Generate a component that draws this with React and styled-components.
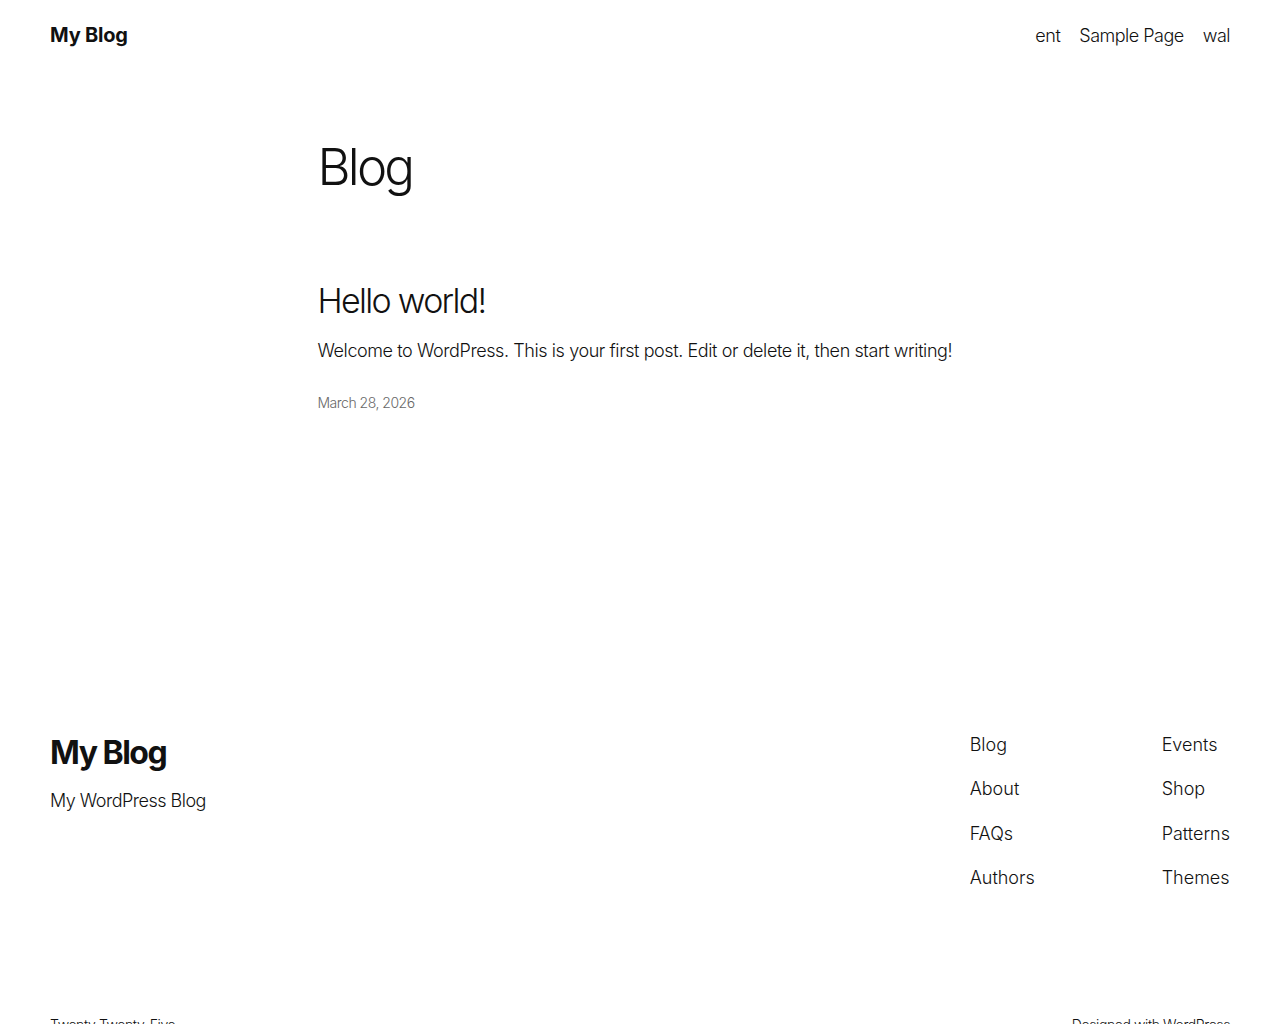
import React from 'react';
import styled, { createGlobalStyle } from 'styled-components';

const GlobalStyle = createGlobalStyle`
  html, body {
    margin: 0;
    padding: 0;
    background: #fff;
  }
  body {
    font-family: Inter, "Noto Sans", sans-serif;
    color: #111111;
    -webkit-font-smoothing: antialiased;
  }
  a {
    color: inherit;
    text-decoration: none;
  }
`;

const navPages = ['ent', 'Sample Page', 'wal'];
const footerCols = [
  ['Blog', 'About', 'FAQs', 'Authors'],
  ['Events', 'Shop', 'Patterns', 'Themes'],
];

const App = () => {
  return (
    <>
      <GlobalStyle />
      <Page>
        <Header>
          <SiteTitle href='#'>My Blog</SiteTitle>
          <Nav>
            {navPages.map((p) => (
              <NavLink key={p} href='#'>
                {p}
              </NavLink>
            ))}
          </Nav>
        </Header>

        <Main>
          <PageTitle>Blog</PageTitle>
          <Post>
            <PostTitle>
              <a href='#'>Hello world!</a>
            </PostTitle>
            <Excerpt>Welcome to WordPress. This is your first post. Edit or delete it, then start writing!</Excerpt>
            <PostDate>March 28, 2026</PostDate>
          </Post>
        </Main>

        <Footer>
          <FooterTop>
            <Brand>
              <FooterTitle href='#'>My Blog</FooterTitle>
              <Tagline>My WordPress Blog</Tagline>
            </Brand>
            <FooterNav>
              {footerCols.map((col, i) => (
                <FooterCol key={i}>
                  {col.map((item) => (
                    <FooterLink key={item} href='#'>
                      {item}
                    </FooterLink>
                  ))}
                </FooterCol>
              ))}
            </FooterNav>
          </FooterTop>
          <FooterBottom>
            <Credit>Twenty Twenty-Five</Credit>
            <Credit>
              Designed with <a href='#'>WordPress</a>
            </Credit>
          </FooterBottom>
        </Footer>
      </Page>
    </>
  );
};

export default App;

const Page = styled.div`
  display: flex;
  flex-direction: column;
  min-height: 100vh;
`;

const Header = styled.header`
  display: flex;
  align-items: center;
  justify-content: space-between;
  height: 70px;
  padding: 0 50px;
`;

const SiteTitle = styled.a`
  font-size: 20px;
  font-weight: 700;
  letter-spacing: -0.2px;
`;

const Nav = styled.nav`
  display: flex;
  gap: 19px;
`;

const NavLink = styled.a`
  font-size: 18px;
  font-weight: 300;
  letter-spacing: -0.5px;
`;

const Main = styled.main`
  width: 645px;
  margin: 0 auto;
  padding-top: 66px;
  min-height: 598px;
`;

const PageTitle = styled.h1`
  margin: 0;
  font-size: 51px;
  line-height: 1.2;
  font-weight: 300;
  letter-spacing: -2.8px;
`;

const Post = styled.article`
  margin-top: 84px;
`;

const PostTitle = styled.h2`
  margin: 0;
  font-size: 34px;
  line-height: 1.2;
  font-weight: 300;
  letter-spacing: -1.7px;
`;

const Excerpt = styled.p`
  margin: 16px 0 0;
  font-size: 18px;
  line-height: 1.4;
  font-weight: 300;
  letter-spacing: -0.41px;
`;

const PostDate = styled.div`
  margin-top: 31px;
  font-size: 14px;
  font-weight: 300;
  color: #686868;
  letter-spacing: -0.5px;
`;

const Footer = styled.footer`
  padding: 0 50px;
`;

const FooterTop = styled.div`
  display: flex;
  justify-content: space-between;
  align-items: flex-start;
`;

const Brand = styled.div`
  display: flex;
  flex-direction: column;
  gap: 18px;
`;

const FooterTitle = styled.a`
  font-size: 32px;
  font-weight: 700;
  letter-spacing: -1.5px;
  line-height: 1.2;
`;

const Tagline = styled.p`
  margin: 0;
  font-size: 18px;
  font-weight: 300;
  letter-spacing: -0.5px;
`;

const FooterNav = styled.nav`
  display: grid;
  grid-template-columns: 192px auto;
`;

const FooterCol = styled.div`
  display: flex;
  flex-direction: column;
  gap: 22.3px;
`;

const FooterLink = styled.a`
  font-size: 18px;
  font-weight: 300;
  line-height: 22px;
  letter-spacing: 0px;
`;

const FooterBottom = styled.div`
  display: flex;
  justify-content: space-between;
  margin-top: 127px;
  padding-bottom: 40px;
`;

const Credit = styled.p`
  margin: 0;
  font-size: 14px;
  font-weight: 300;
  letter-spacing: -0.4px;
`;
